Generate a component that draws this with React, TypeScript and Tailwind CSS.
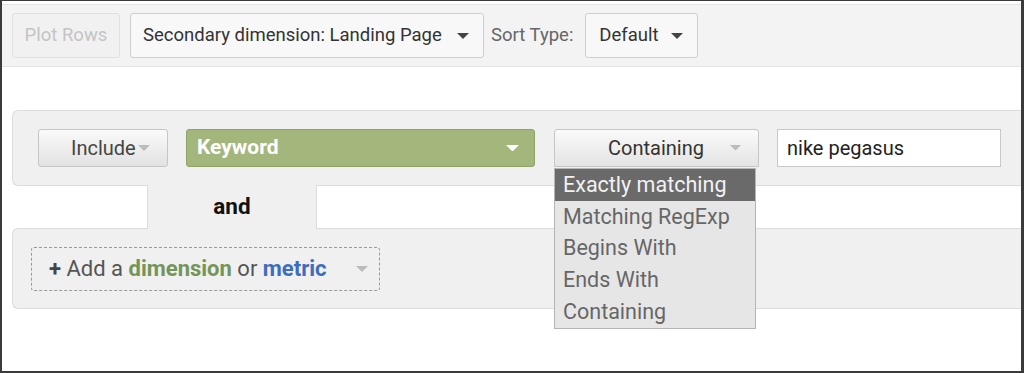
const Caret = ({ color = '#444', w = 12 }: { color?: string; w?: number }) => (
  <svg width={w} height={w / 2} viewBox="0 0 12 6" className="shrink-0">
    <path d="M0 0 L12 0 L6 6 Z" fill={color} />
  </svg>
);

export default function App() {
  const options = ['Exactly matching', 'Matching RegExp', 'Begins With', 'Ends With', 'Containing'];

  return (
    <div
      className="relative w-[1024px] h-[373px] overflow-hidden bg-white border-l-2 border-t border-r-[3px] border-b-2 border-[#3a3a3a]"
      style={{ fontFamily: 'Roboto, "Liberation Sans", sans-serif' }}
    >
      {/* Toolbar */}
      <div className="mt-[3px] h-[63px] bg-[#f3f3f3] border-t border-b border-[#e4e4e4] flex items-center gap-[10px] pl-[10px]">
        <button className="h-[45px] w-[108px] rounded-[3px] border border-[#e0e0e0] bg-[#f1f1f1] text-[18.5px] text-[#c4c4c4]">
          Plot Rows
        </button>
        <button className="h-[45px] w-[354px] rounded-[3px] border border-[#cfcfcf] bg-[#f8f8f8] flex items-center justify-between pl-[12px] pr-[14px] text-[18.5px] text-[#333]">
          <span>Secondary dimension: Landing Page</span>
          <Caret />
        </button>
        <span className="text-[18.5px] text-[#666] ml-[-3px]">Sort Type:</span>
        <button className="ml-[2px] h-[45px] w-[113px] rounded-[3px] border border-[#cfcfcf] bg-[#f8f8f8] flex items-center justify-between pl-[13px] pr-[14px] text-[18.5px] text-[#333]">
          <span>Default</span>
          <Caret />
        </button>
      </div>

      {/* Filter builder */}
      <div className="mt-[43px] ml-[10px]">
        <div className="h-[76px] rounded-l-[6px] bg-[#f0f0f0] border border-r-0 border-[#dcdcdc] flex items-center pl-[25px]">
          <button className="h-[38px] w-[130px] rounded-[3px] border border-[#c6c6c6] bg-gradient-to-b from-[#fafafa] to-[#e2e2e2] flex items-center pl-[32px] gap-[2px] text-[20px] text-[#444]">
            <span>Include</span>
            <Caret color="#bbb" w={12} />
          </button>
          <div className="ml-[18px] h-[38px] w-[349px] rounded-[3px] border border-[#8ea366] bg-[#a3b77c] flex items-center justify-between pl-[10px] pr-[15px]">
            <span className="text-[21px] font-bold text-white">Keyword</span>
            <Caret color="#fff" w={13} />
          </div>
          <div className="relative ml-[19px]">
            <button className="h-[38px] w-[205px] rounded-t-[3px] border border-[#c6c6c6] bg-gradient-to-b from-[#fafafa] to-[#e4e4e4] flex items-center pl-[53px] pr-[17px] justify-between text-[20px] text-[#333]">
              <span>Containing</span>
              <Caret color="#bbb" w={11} />
            </button>
            <ul className="absolute left-0 top-[39px] z-10 w-[202px] border border-[#b5b5b5] bg-[#e6e6e6] text-[21.5px] leading-[31.7px] text-[#666]">
              {options.map((o, i) => (
                <li key={o} className={i === 0 ? 'bg-[#6a6a6a] text-[#f2f2f2] pl-[8px]' : 'pl-[8px]'}>
                  {o}
                </li>
              ))}
            </ul>
          </div>
          <div className="ml-[18px] h-[38px] w-[224px] border border-[#c9c9c9] bg-white flex items-center pl-[9px] text-[20px] text-[#222]">
            nike pegasus
          </div>
        </div>

        {/* connector */}
        <div className="flex h-[42px]">
          <div className="w-[135px]" />
          <div className="w-[170px] bg-[#f0f0f0] border-l border-r border-[#dcdcdc] flex items-center justify-center -my-px">
            <span className="text-[22.5px] font-bold text-[#111]">and</span>
          </div>
        </div>

        <div className="h-[81px] rounded-l-[6px] bg-[#f0f0f0] border border-r-0 border-[#dcdcdc] flex items-center pl-[18px]">
          <div className="h-[44px] w-[349px] rounded-[3px] border border-dashed border-[#9a9a9a] flex items-center justify-between pl-[17px] pr-[11px] text-[22px]">
            <span className="text-[#555]">
              <span className="font-bold text-[#444]">+</span> Add a{' '}
              <span className="font-bold text-[#74955a]">dimension</span> or{' '}
              <span className="font-bold text-[#3e6dbd]">metric</span>
            </span>
            <Caret color="#bbb" w={12} />
          </div>
        </div>
      </div>
    </div>
  );
}
